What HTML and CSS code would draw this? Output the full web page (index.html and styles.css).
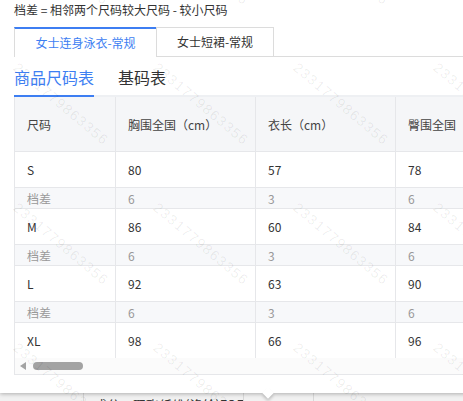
FILE: index.html
```html
<!DOCTYPE html>
<html lang="zh">
<head>
<meta charset="utf-8">
<link rel="stylesheet" href="styles.css">
</head>
<body>
<div class="popover">
  <div class="note">档差 = 相邻两个尺码较大尺码 - 较小尺码</div>
  <div class="tabs">
    <div class="tab active">女士连身泳衣-常规</div>
    <div class="tab">女士短裙-常规</div>
  </div>
  <div class="subtabs">
    <div class="subtab active">商品尺码表</div>
    <div class="subtab">基码表</div>
  </div>
  <div class="table-wrap">
    <div class="table-scroll">
      <div class="grid">
        <div class="cell head">尺码</div>
        <div class="cell head">胸围全国（cm）</div>
        <div class="cell head">衣长（cm）</div>
        <div class="cell head">臀围全国</div>
        <div class="cell head"></div>

        <div class="cell row">S</div>
        <div class="cell row">80</div>
        <div class="cell row">57</div>
        <div class="cell row">78</div>
        <div class="cell row"></div>

        <div class="cell diff">档差</div>
        <div class="cell diff">6</div>
        <div class="cell diff">3</div>
        <div class="cell diff">6</div>
        <div class="cell diff"></div>

        <div class="cell row">M</div>
        <div class="cell row">86</div>
        <div class="cell row">60</div>
        <div class="cell row">84</div>
        <div class="cell row"></div>

        <div class="cell diff">档差</div>
        <div class="cell diff">6</div>
        <div class="cell diff">3</div>
        <div class="cell diff">6</div>
        <div class="cell diff"></div>

        <div class="cell row">L</div>
        <div class="cell row">92</div>
        <div class="cell row">63</div>
        <div class="cell row">90</div>
        <div class="cell row"></div>

        <div class="cell diff">档差</div>
        <div class="cell diff">6</div>
        <div class="cell diff">3</div>
        <div class="cell diff">6</div>
        <div class="cell diff"></div>

        <div class="cell row">XL</div>
        <div class="cell row">98</div>
        <div class="cell row">66</div>
        <div class="cell row">96</div>
        <div class="cell row"></div>
      </div>
    </div>
    <div class="scrollbar">
      <span class="arrow-left"></span>
      <span class="thumb"></span>
    </div>
  </div>
  <span class="pointer"></span>
</div>
<div class="below">
  <div class="bcell c1"></div>
  <div class="bcell c2">成分：聚酯纤维(涤纶)FOF</div>
  <div class="bcell c3"></div>
  <div class="bcell c4"></div>
</div>
<div class="watermark">
  <span>2331779863356</span><span>2331779863356</span><span>2331779863356</span><span>2331779863356</span><span>2331779863356</span>
  <span>2331779863356</span><span>2331779863356</span><span>2331779863356</span><span>2331779863356</span><span>2331779863356</span>
  <span>2331779863356</span><span>2331779863356</span><span>2331779863356</span><span>2331779863356</span><span>2331779863356</span>
  <span>2331779863356</span><span>2331779863356</span><span>2331779863356</span><span>2331779863356</span><span>2331779863356</span>
</div>
</body>
</html>
```

FILE: styles.css
```css
* { box-sizing: border-box; }
html, body {
  margin: 0;
  padding: 0;
  width: 463px;
  height: 401px;
  overflow: hidden;
  background: #ececec;
}
body {
  position: relative;
  font-family: "Noto Sans CJK SC", "Noto Sans", sans-serif;
  font-size: 12px;
  color: #333;
}
.popover {
  position: relative;
  width: 520px;
  height: 393px;
  background: #fff;
  padding: 0 0 0 14px;
  box-shadow: 0 1px 4px rgba(0, 0, 0, 0.28);
  z-index: 2;
}
.note {
  height: 20px;
  line-height: 20px;
  color: #333;
  margin-bottom: 7px;
  white-space: nowrap;
}
.tabs {
  display: flex;
  align-items: flex-start;
  border-bottom: 1px solid #dcdcdc;
  height: 30px;
}
.tab {
  flex-shrink: 0;
  height: 29px;
  line-height: 27px;
  border: 1px solid #dcdcdc;
  border-bottom: none;
  width: 118px;
  text-align: center;
  white-space: nowrap;
  background: #fff;
  color: #333;
}
.tab.active {
  height: 30px;
  line-height: 28px;
  border-top: 2px solid #3d7ef2;
  border-right: none;
  color: #3d7ef2;
  width: 142px;
}
.subtabs {
  display: flex;
  gap: 24px;
  height: 40px;
  border-bottom: 2px solid #eef0f3;
}
.subtab {
  padding-top: 2px;
  line-height: 36px;
  font-size: 16px;
  color: #333;
  white-space: nowrap;
}
.subtab.active {
  color: #3d7ef2;
  border-bottom: 2px solid #3d7ef2;
  height: 40px;
}
.table-wrap {
  border-left: 1px solid #e6e7ea;
  border-bottom: 1px solid #e6e7ea;
  height: 278px;
  overflow: hidden;
}
.table-scroll {
  height: 261px;
  overflow: hidden;
}
.grid {
  display: grid;
  grid-template-columns: 101px 140px 140px 140px 140px;
  grid-template-rows: 55px 36px 21px 36px 21px 36px 21px 36px;
}
.cell {
  border-right: 1px solid #e6e7ea;
  border-bottom: 1px solid #e6e7ea;
  padding-left: 12px;
  display: flex;
  align-items: center;
  white-space: nowrap;
}
.head {
  background: #f5f6f8;
  color: #444;
}
.row {
  background: #fff;
  color: #333;
}
.diff {
  background: #f7f8fa;
  color: #999;
}
.scrollbar {
  height: 16px;
  background: #fbfbfb;
  display: flex;
  align-items: center;
  padding-left: 5px;
  gap: 7px;
}
.arrow-left {
  width: 0;
  height: 0;
  border-top: 4px solid transparent;
  border-bottom: 4px solid transparent;
  border-right: 6px solid #a3a3a3;
}
.thumb {
  width: 50px;
  height: 8px;
  border-radius: 4px;
  background: #a3a3a3;
}
.pointer {
  position: absolute;
  left: 264px;
  bottom: -4px;
  width: 8px;
  height: 8px;
  background: #fff;
  transform: rotate(45deg);
  box-shadow: 2px 2px 3px rgba(0, 0, 0, 0.18);
}
.below {
  display: flex;
  height: 8px;
  background: #f1f1f1;
  overflow: visible;
}
.bcell {
  border-right: 1px solid #d8d8d8;
  font-size: 13px;
  line-height: 18px;
  color: #333;
  padding-top: 3px;
  white-space: nowrap;
  overflow: hidden;
}
.c1 { width: 84px; }
.c2 { width: 160px; padding-left: 10px; }
.c3 { width: 70px; }
.c4 { flex: 1; border-right: none; }
.watermark {
  position: absolute;
  left: -120px;
  top: -80px;
  display: grid;
  grid-template-columns: repeat(5, 140px);
  grid-auto-rows: 140px;
  pointer-events: none;
  z-index: 5;
}
.watermark span {
  display: block;
  width: 0;
  white-space: nowrap;
  font-family: "Liberation Sans", sans-serif;
  font-size: 14px;
  letter-spacing: 1.4px;
  line-height: 14px;
  color: rgba(0, 0, 0, 0.07);
  transform-origin: 0 0;
  transform: rotate(40deg);
}
```
